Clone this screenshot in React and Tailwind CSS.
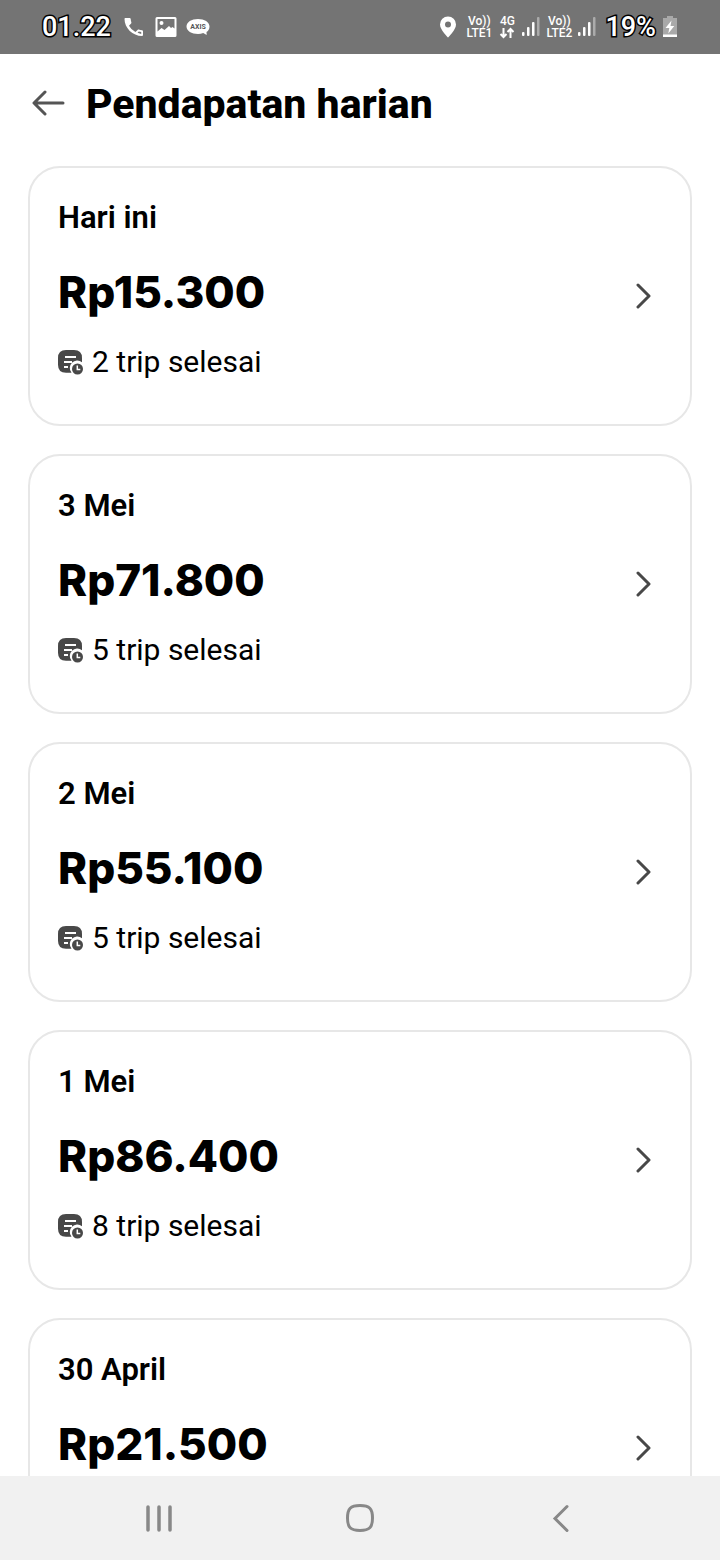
import React from "react";

const days = [
    { date: "Hari ini", amount: "Rp15.300", trips: 2 },
    { date: "3 Mei", amount: "Rp71.800", trips: 5 },
    { date: "2 Mei", amount: "Rp55.100", trips: 5 },
    { date: "1 Mei", amount: "Rp86.400", trips: 8 },
    { date: "30 April", amount: "Rp21.500", trips: null },
];

function SignalIcon() {
    return (
        <svg className="w-5 h-5" viewBox="0 0 20 20" fill="white">
            <rect x="1" y="15" width="2.500" height="4" rx="1" />
            <rect x="6" y="10" width="2.500" height="9" rx="1" />
            <rect x="11" y="5" width="2.500" height="14" rx="1" />
            <rect x="16" y="0" width="2.500" height="19" rx="1" opacity="0.4" />
        </svg>
    );
}

function VolteLabel({ sim }) {
    return (
        <div className="w-7 text-center text-xs leading-3 font-medium">
            <div>Vo))</div>
            <div>LTE{sim}</div>
        </div>
    );
}

function StatusBar() {
    return (
        <div className="h-[54px] shrink-0 flex items-center justify-between pl-[42px] pr-10 bg-[#747474] text-white font-[Roboto,sans-serif]">
            <div className="flex items-center">
                <span className="w-20 text-[27px] leading-8 font-medium [-webkit-text-stroke:3px_black] [paint-order:stroke_fill]">
                    01.22
                </span>
                <svg className="w-6 h-6" viewBox="0 0 24 24" fill="white" fillRule="evenodd">
                    <path d="M3.500 3h4.200c.6 0 .9.4 1 .9.1 1.200.3 2.400.7 3.500.1.4 0 .8-.3 1.100L7 10.700a15 15 0 0 0 6.400 6.300l2.200-2.100c.3-.3.7-.4 1.100-.3 1.100.4 2.200.6 3.400.7.5 0 .9.4.9.9v3.900c0 .6-.4.9-1 .9C10.700 21 2.500 13 2.500 4c0-.6.4-1 1-1ZM16.800 16.500l-1.300 1.300 3.700 1.200v-2.100Z" />
                </svg>
                <svg className="ml-2 w-6 h-6" viewBox="0 0 24 24" fill="white" fillRule="evenodd">
                    <path d="M3 2h18a1.500 1.500 0 0 1 1.500 1.500v17A1.500 1.500 0 0 1 21 22H3a1.500 1.500 0 0 1-1.500-1.500v-17A1.500 1.500 0 0 1 3 2Zm.5 2v12.500l4-3.500 3 2 4.500-4 2 2 1.500-1 2 1.500V4ZM7.500 6a2 2 0 1 1 0 4 2 2 0 0 1 0-4Z" />
                </svg>
                <svg className="ml-2 w-6 h-6" viewBox="0 0 24 24">
                    <path d="M12 4c6.400 0 11.500 3 11.500 7.500 0 3-1.500 4.500-3 5.500l.2 3-3.500-2c-1.500.6-3.200 1-5.200 1C5.600 19 .5 16 .5 11.500S5.600 4 12 4Z" fill="white" />
                    <text x="12" y="14" textAnchor="middle" fontSize="7" fontWeight="700" fill="#555">AXIS</text>
                </svg>
            </div>
            <div className="flex items-center">
                <svg className="w-[18px] h-[22px]" viewBox="0 0 18 22" fill="white" fillRule="evenodd">
                    <path d="M9 0.500a8 8 0 0 1 8 8C17 14 9 21.500 9 21.500S1 14 1 8.500a8 8 0 0 1 8-8Zm0 5a3 3 0 1 0 0 6 3 3 0 0 0 0-6Z" />
                </svg>
                <div className="ml-2 flex items-center">
                    <VolteLabel sim={1} />
                    <div className="ml-1 w-5 flex flex-col items-center text-xs leading-3 font-medium">
                        <span>4G</span>
                        <svg className="w-4 h-3" viewBox="0 0 16 12" fill="none" stroke="white" strokeWidth="2">
                            <path d="M4.500 1v9M1.500 7l3 3 3-3M11.500 11V2M8.500 5l3-3 3 3" />
                        </svg>
                    </div>
                </div>
                <div className="ml-1">
                    <SignalIcon />
                </div>
                <div className="ml-1 flex items-center">
                    <VolteLabel sim={2} />
                    <div className="ml-1">
                        <SignalIcon />
                    </div>
                </div>
                <span className="ml-2 text-[27px] leading-8 font-medium [-webkit-text-stroke:3px_black] [paint-order:stroke_fill]">
                    19%
                </span>
                <svg className="ml-1 w-5 h-6" viewBox="0 0 20 24">
                    <path d="M7 1h6v2h4v19H3V3h4Z" fill="#a9a9a9" />
                    <path d="M3 19.500h14V22H3Z" fill="white" />
                    <path d="M11.500 5.500 5.500 13h3.800l-1 5.500 6-7.500h-3.800Z" fill="white" />
                </svg>
            </div>
        </div>
    );
}

function TripIcon() {
    return (
        <svg className="w-[26px] h-[26px]" viewBox="0 0 26 26" fill="none">
            <path d="M8 1h8q8 0 8 8v4.200a7.500 7.500 0 0 0-10.500 10.600H8q-8 0-8-8V9q0-8 8-8Z" fill="#484848" />
            <path d="M7 8h11M6 13h8M6 18h4" stroke="white" strokeWidth="2" />
            <circle cx="19.500" cy="20" r="5.500" fill="#484848" />
            <path d="M19.300 16.500v4h3" stroke="white" strokeWidth="1.500" />
        </svg>
    );
}

function DayCard({ day }) {
    return (
        <button
            type="button"
            className="w-full flex items-center justify-between pl-7 pr-[38px] text-left rounded-[32px] border-2 border-[#e7e7e7] bg-white"
        >
            <span className="block pt-7 pb-10">
                <span className="block text-[31px] leading-[44px] font-semibold font-[Roboto,sans-serif]">{day.date}</span>
                <span className="block mt-5 text-[44px] leading-[64px] font-extrabold">{day.amount}</span>
                <span className="mt-4 min-h-[44px] flex items-center gap-2 text-[30px] leading-[44px] font-[Roboto,sans-serif]">
                    {day.trips !== null && (
                        <>
                            <TripIcon />
                            {day.trips} trip selesai
                        </>
                    )}
                </span>
            </span>
            <svg className="w-4 h-7" viewBox="0 0 16 28" fill="none" stroke="#484848" strokeWidth="3" strokeLinecap="round" strokeLinejoin="round">
                <path d="m2 3 11 11L2 25" />
            </svg>
        </button>
    );
}

function NavBar() {
    return (
        <nav className="h-[84px] shrink-0 grid grid-cols-3 px-[58px] bg-[#f1f1f1]">
            <button type="button" aria-label="Recent apps" className="flex items-center justify-center">
                <svg className="w-8 h-8" viewBox="0 0 32 32" stroke="#888" strokeWidth="3.500" strokeLinecap="round">
                    <path d="M5 5v23M16 5v23M27 5v23" />
                </svg>
            </button>
            <button type="button" aria-label="Home" className="flex items-center justify-center">
                <svg className="w-8 h-8" viewBox="0 0 32 32" fill="none" stroke="#888" strokeWidth="3">
                    <path d="M16 3.500c9.500 0 12.500 3 12.500 12.500s-3 12.500-12.500 12.500S3.500 25.500 3.500 16 6.500 3.500 16 3.500Z" />
                </svg>
            </button>
            <button type="button" aria-label="Back" className="flex items-center justify-center">
                <svg className="w-8 h-8" viewBox="0 0 32 32" fill="none" stroke="#888" strokeWidth="3" strokeLinecap="round">
                    <path d="M22 4.500 10 16.500l12 12" />
                </svg>
            </button>
        </nav>
    );
}

export default function App() {
    return (
        <div className="h-screen flex flex-col bg-white text-black font-[Inter,sans-serif]">
            <StatusBar />

            <header className="h-[100px] shrink-0 flex items-center gap-5 px-8">
                <button type="button" aria-label="Kembali">
                    <svg className="w-[34px] h-7" viewBox="0 0 34 28" fill="none" stroke="#555" strokeWidth="3" strokeLinecap="round" strokeLinejoin="round">
                        <path d="M31 13H3M13 2 2 13l11 11" />
                    </svg>
                </button>
                <h1 className="text-[41px] leading-[48px] font-extrabold font-[Roboto,sans-serif]">Pendapatan harian</h1>
            </header>

            <main className="flex-1 min-h-0 overflow-y-auto [scrollbar-width:none] px-7 pt-3 pb-7 flex flex-col gap-7">
                {days.map((day) => (
                    <DayCard key={day.date} day={day} />
                ))}
            </main>

            <NavBar />
        </div>
    );
}
